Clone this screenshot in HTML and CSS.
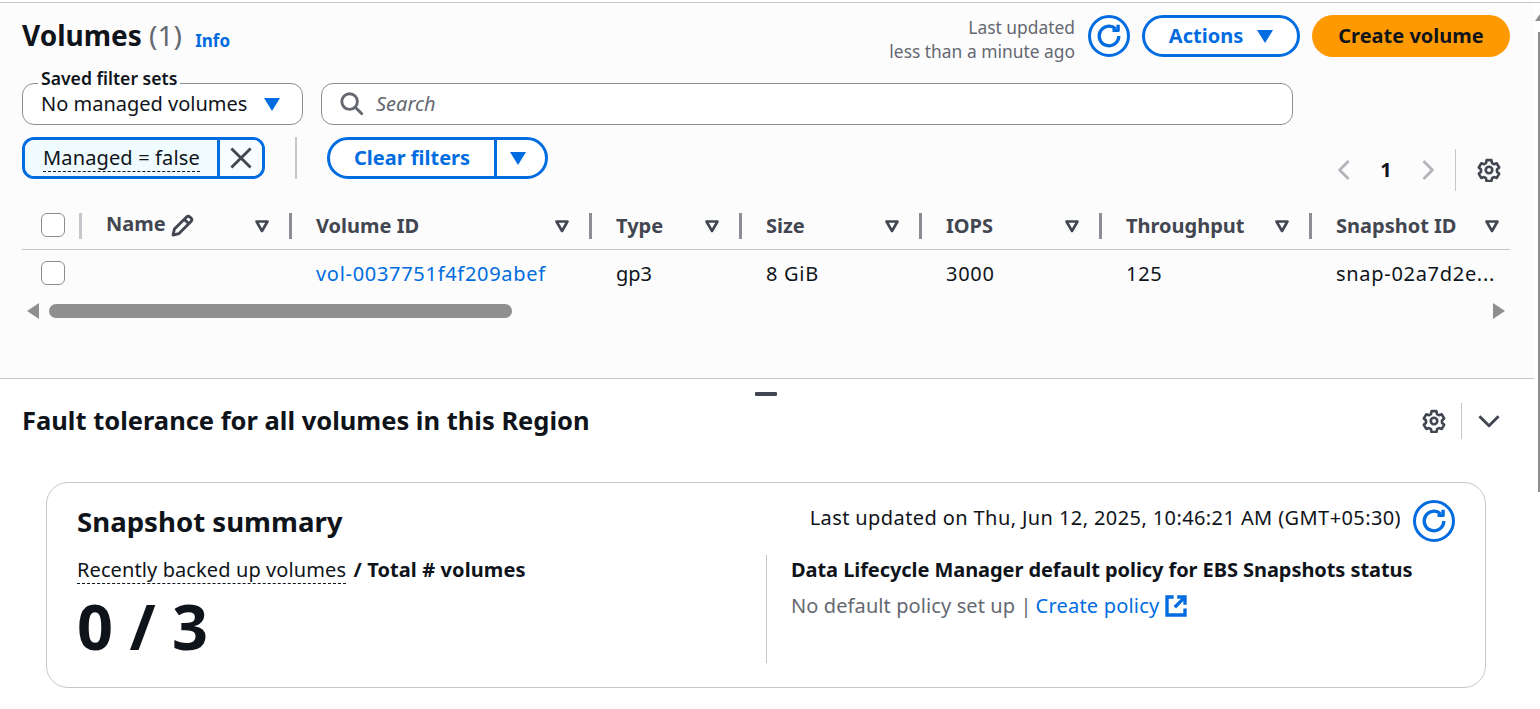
FILE: index.html
```html
<!DOCTYPE html>
<html lang="en">
<head>
  <meta charset="UTF-8" />
  <title>Volumes</title>
  <link rel="stylesheet" href="styles.css">
</head>
<body>
  <div class="top-rule"></div>
  <section class="top-panel">
    <div class="head-row">
      <h1 class="title">Volumes <span class="count">(1)</span> <a class="info">Info</a></h1>
      <div class="head-actions">
        <p class="updated">Last updated<br>less than a minute ago</p>
        <button class="icon-btn" aria-label="Refresh">
          <svg viewBox="0 0 20 20" width="28" height="28"><use href="#refresh-icon" /></svg>
        </button>
        <button class="btn btn-normal">Actions <span class="caret"></span></button>
        <button class="btn btn-primary">Create volume</button>
      </div>
    </div>

    <div class="filter-row">
      <div class="saved-filter">
        <span class="saved-label">Saved filter sets</span>
        <span>No managed volumes</span>
        <span class="caret"></span>
      </div>
      <div class="search">
        <svg viewBox="0 0 20 20" width="24" height="24"><circle cx="8" cy="8" r="6.500" /><path d="M12.800 12.800l6 6" /></svg>
        <span>Search</span>
      </div>
    </div>

    <div class="token-row">
      <div class="token-area">
        <div class="token">
          <span class="token-text"><span class="dotted">Managed = false</span></span>
          <button class="token-x" aria-label="Remove">
            <svg viewBox="0 0 20 20" width="24" height="24"><path d="M2 2l16 16M18 2L2 18" /></svg>
          </button>
        </div>
        <div class="token-sep"></div>
        <div class="split">
          <button class="split-main">Clear filters</button>
          <button class="split-arrow" aria-label="More"><span class="caret"></span></button>
        </div>
      </div>
      <div class="pager">
        <svg class="chev" viewBox="0 0 20 20" width="24" height="24"><path d="M13 2.500l-7.500 7.500 7.500 7.500" /></svg>
        <span class="page-num">1</span>
        <svg class="chev" viewBox="0 0 20 20" width="24" height="24"><path d="M7 2.500l7.500 7.500-7.500 7.500" /></svg>
        <span class="tool-sep"></span>
        <svg class="gear" viewBox="1 1 22 22" width="24" height="24"><use href="#gear-icon" /></svg>
      </div>
    </div>

    <div class="table">
      <div class="t-row t-head">
        <div class="cell cell-check"><span class="checkbox"></span></div>
        <div class="cell cell-name">
          <span class="name-head"><span class="name-text">Name</span>
            <svg viewBox="0 0 20 20" width="24" height="24"><path d="M2.500 17.500l1.200-5L13.800 2.500a2 2 0 0 1 2.800 0l.9.900a2 2 0 0 1 0 2.800L7.500 16.300z" /><path d="M12 4.500l3.500 3.500" /></svg>
          </span>
          <svg class="sort" viewBox="0 0 16 16" width="16" height="16"><use href="#sort-icon" /></svg>
        </div>
        <div class="cell">Volume ID<svg class="sort" viewBox="0 0 16 16" width="16" height="16"><use href="#sort-icon" /></svg></div>
        <div class="cell">Type<svg class="sort" viewBox="0 0 16 16" width="16" height="16"><use href="#sort-icon" /></svg></div>
        <div class="cell">Size<svg class="sort" viewBox="0 0 16 16" width="16" height="16"><use href="#sort-icon" /></svg></div>
        <div class="cell">IOPS<svg class="sort" viewBox="0 0 16 16" width="16" height="16"><use href="#sort-icon" /></svg></div>
        <div class="cell">Throughput<svg class="sort" viewBox="0 0 16 16" width="16" height="16"><use href="#sort-icon" /></svg></div>
        <div class="cell cell-last">Snapshot ID<svg class="sort" viewBox="0 0 16 16" width="16" height="16"><use href="#sort-icon" /></svg></div>
      </div>
      <div class="t-row t-body">
        <div class="cell cell-check"><span class="checkbox"></span></div>
        <div class="cell"></div>
        <div class="cell"><a class="link num">vol-0037751f4f209abef</a></div>
        <div class="cell">gp3</div>
        <div class="cell"><span class="num">8 GiB</span></div>
        <div class="cell"><span class="num">3000</span></div>
        <div class="cell"><span class="num">125</span></div>
        <div class="cell cell-last"><span class="num">snap-02a7d2e...</span></div>
      </div>
    </div>

    <div class="hscroll">
      <span class="arrow-left"></span>
      <div class="hscroll-track"><div class="hscroll-thumb"></div></div>
      <span class="arrow-right"></span>
    </div>
  </section>

  <section class="bottom-panel">
    <span class="drag-handle"></span>
    <div class="fault-head">
      <h2 class="fault-title">Fault tolerance for all volumes in this Region</h2>
      <div class="fault-tools">
        <svg class="gear" viewBox="1 1 22 22" width="24" height="24"><use href="#gear-icon" /></svg>
        <span class="tool-sep tool-sep-short"></span>
        <svg class="chev-down" viewBox="0 0 20 20" width="24" height="24"><path d="M2 6l8 8 8-8" /></svg>
      </div>
    </div>

    <div class="card">
      <div class="card-head">
        <h3 class="card-title">Snapshot summary</h3>
        <div class="card-updated">
          <span class="card-updated-text">Last updated on Thu, Jun 12, 2025, 10:46:21 AM (GMT+05:30)</span>
          <button class="icon-btn" aria-label="Refresh">
            <svg viewBox="0 0 20 20" width="28" height="28"><use href="#refresh-icon" /></svg>
          </button>
        </div>
      </div>
      <div class="card-cols">
        <div class="col-left">
          <p class="metric-label"><span class="dotted">Recently backed up volumes</span> <b class="metric-total">/ Total # volumes</b></p>
          <p class="metric">0 / 3</p>
        </div>
        <div class="col-right">
          <p class="policy-title">Data Lifecycle Manager default policy for EBS Snapshots status</p>
          <p class="policy-text"><span class="policy-note">No default policy set up |</span><a class="link policy-link">Create policy</a>
            <svg class="ext" viewBox="0 0 20 20" width="24" height="24"><path d="M8 2.500H2.500v15h15V12" /><path d="M11 2.500h6.500V9" /><path d="M17 3l-8 8" /></svg>
          </p>
        </div>
      </div>
    </div>
  </section>

  <svg class="defs" width="0" height="0">
    <defs>
      <g id="gear-icon">
        <path d="M9.800 3h4.400l.6 2.700 1.700 1 2.600-.8 2.200 3.800-2 1.900v2l2 1.900-2.200 3.800-2.600-.8-1.700 1-.6 2.700H9.800l-.6-2.700-1.700-1-2.600.8-2.200-3.800 2-1.900v-2l-2-1.900 2.200-3.800 2.600.8 1.700-1z" />
        <circle cx="12" cy="12" r="3" />
      </g>
      <g id="refresh-icon">
        <path d="M17 10a7 7 0 1 1-2.300-5.200" />
        <path d="M16.500 2v4h-4" />
      </g>
      <path id="sort-icon" d="M2.500 3.500h11L8 13z" />
    </defs>
  </svg>
  <div class="page-scroll"></div>
</body>
</html>
```

FILE: styles.css
```css
:root {
  --blue: #006ce0;
  --ink: #0f141a;
  --head-ink: #424650;
  --muted: #656871;
  --line: #c6c6cd;
  --border: #8c8c94;
}

* {
  box-sizing: border-box;
}

html, body {
  height: 100%;
}

body {
  margin: 0;
  padding-top: 2px;
  font-family: "Noto Sans", "Open Sans", sans-serif;
  font-size: 20px;
  line-height: 28px;
  color: var(--ink);
  background: #fff;
  overflow: hidden;
}

svg {
  fill: none;
  stroke: currentColor;
  stroke-width: 2.4;
  stroke-linejoin: round;
  flex: none;
}

button {
  font: inherit;
  background: none;
  border: none;
  padding: 0;
}

p, h1, h2, h3 {
  margin: 0;
}

.defs {
  position: absolute;
}

/* browser scrollbar sliver on the right edge */
.page-scroll {
  position: absolute;
  right: 0;
  top: 32px;
  width: 2px;
  height: 460px;
  background: #8f8f8f;
}

.page-scroll::before {
  content: "";
  position: absolute;
  top: -18px;
  right: 0;
  border-left: 5px solid transparent;
  border-bottom: 7px solid #8f8f8f;
}

.top-rule {
  height: 1px;
  background: var(--line);
}

/* top split panel */
.top-panel {
  height: 376px;
  margin-right: 6px;
  padding: 12px 24px 0 22px;
  background: #fcfcfc;
  border-bottom: 1px solid var(--line);
}

.head-row {
  display: flex;
  justify-content: space-between;
  height: 43px;
}

.title {
  font-size: 28px;
  line-height: 40px;
  font-weight: 700;
}

.count {
  font-weight: 400;
  color: var(--muted);
}

.info {
  font-size: 17px;
  font-weight: 700;
  color: var(--blue);
  margin-left: 6px;
  vertical-align: -1px;
}

.head-actions {
  display: flex;
  align-items: flex-start;
  gap: 12px;
}

.updated {
  font-size: 17.400px;
  line-height: 24px;
  text-align: right;
  color: var(--muted);
  margin-right: 1px;
}

.icon-btn {
  width: 42px;
  height: 42px;
  border: 3px solid var(--blue);
  border-radius: 50%;
  color: var(--blue);
  display: flex;
  align-items: center;
  justify-content: center;
  background: #fff;
}

.btn {
  height: 42px;
  border-radius: 21px;
  font-weight: 700;
  display: flex;
  align-items: center;
  justify-content: center;
}

.btn-normal {
  width: 158px;
  gap: 14px;
  color: var(--blue);
  background: #fff;
  border: 3px solid var(--blue);
}

.btn-primary {
  width: 198px;
  background: #ff9900;
  color: var(--ink);
}

.caret {
  display: inline-block;
  width: 0;
  height: 0;
  border-left: 8px solid transparent;
  border-right: 8px solid transparent;
  border-top: 13px solid var(--blue);
}

/* filter row */
.filter-row {
  display: flex;
  gap: 18px;
  margin-top: 25px;
}

.saved-filter {
  position: relative;
  width: 281px;
  height: 42px;
  border: 1px solid var(--border);
  border-radius: 12px;
  background: #fff;
  padding: 0 22px 0 18px;
  display: flex;
  align-items: center;
  justify-content: space-between;
}

.saved-label {
  position: absolute;
  top: -17px;
  left: 15px;
  padding: 0 3px;
  font-size: 17.600px;
  line-height: 22px;
  font-weight: 600;
  background: linear-gradient(#fcfcfc 72%, #fff 72%);
}

.search {
  width: 972px;
  height: 42px;
  border: 1px solid var(--border);
  border-radius: 12px;
  background: #fff;
  padding-left: 18px;
  display: flex;
  align-items: center;
  gap: 12px;
  font-style: italic;
  color: var(--muted);
}

.token-row {
  display: flex;
  justify-content: space-between;
  margin-top: 12px;
}

.token-area {
  display: flex;
  align-items: center;
  height: 42px;
}

.token {
  display: flex;
  width: 243px;
  height: 42px;
  border: 3px solid var(--blue);
  border-radius: 12px;
  overflow: hidden;
}

.token-text {
  flex: 1;
  background: #f0fbff;
  padding-left: 18px;
  line-height: 36px;
  letter-spacing: .14px;
}

.dotted {
  border-bottom: 1px dashed var(--ink);
}

.token-x {
  width: 45px;
  border-left: 3px solid var(--blue);
  color: var(--head-ink);
  display: flex;
  align-items: center;
  justify-content: center;
  background: #f6fcff;
}

.token-sep {
  width: 2px;
  height: 42px;
  background: var(--line);
  margin: 0 30px;
}

.split {
  display: flex;
  width: 221px;
  height: 42px;
  border: 3px solid var(--blue);
  border-radius: 21px;
  background: #fff;
  color: var(--blue);
  font-weight: 700;
}

.split-main {
  width: 167px;
  color: inherit;
  font-weight: 700;
  border-right: 3px solid var(--blue);
}

.split-arrow {
  flex: 1;
  display: flex;
  align-items: center;
  justify-content: center;
  padding-right: 6px;
}

.pager {
  display: flex;
  align-items: center;
  height: 42px;
  margin: 12px 9px 0 0;
}

.chev {
  color: #b4b4bb;
}

.page-num {
  font-weight: 700;
  width: 58px;
  text-align: center;
}

.tool-sep {
  width: 1px;
  height: 42px;
  background: var(--line);
  margin: 0 21px 0 16px;
}

.tool-sep-short {
  height: 36px;
  margin: 0 15px;
}

.gear {
  color: var(--head-ink);
}

/* table */
.table {
  margin-top: 10px;
  width: 1488px;
}

.t-row {
  display: grid;
  grid-template-columns: 58px 210px 300px 150px 180px 180px 210px 200px;
}

.t-head {
  height: 49px;
  border-bottom: 1px solid var(--line);
  font-weight: 700;
  color: var(--head-ink);
}

.t-body {
  height: 49px;
  padding-bottom: 2px;
}

.cell {
  padding: 0 20px 0 26px;
  display: flex;
  align-items: center;
  justify-content: space-between;
  white-space: nowrap;
}

.t-head .cell {
  position: relative;
  padding-top: 2px;
}

.t-head .cell::before {
  content: "";
  position: absolute;
  left: -1px;
  top: 12px;
  height: 26px;
  width: 3px;
  background: var(--border);
}

.t-head .cell-check::before {
  display: none;
}

.t-head .cell-name::before {
  background: var(--line);
}

.cell-check,
.t-head .cell-check {
  padding: 0 0 0 19px;
}

.cell-last {
  padding-right: 10px;
}

.checkbox {
  width: 24px;
  height: 24px;
  border: 1px solid var(--border);
  border-radius: 6px;
  background: #fff;
}

.t-body .checkbox {
  margin-bottom: 2px;
}

.name-head {
  display: flex;
  align-items: center;
  gap: 4px;
}

.name-text {
  margin-bottom: 4px;
}

.sort {
  color: var(--head-ink);
  stroke-width: 2.600;
}

.link {
  color: var(--blue);
}

/* digits run wider in the original font */
.num {
  letter-spacing: .7px;
}

/* horizontal scrollbar */
.hscroll {
  display: flex;
  align-items: center;
  gap: 10px;
  width: 1488px;
  padding-left: 5px;
  height: 24px;
}

.hscroll-track {
  flex: 1;
}

.hscroll-thumb {
  width: 463px;
  height: 14px;
  border-radius: 7px;
  background: #8f8f8f;
}

.arrow-left {
  border-top: 8px solid transparent;
  border-bottom: 8px solid transparent;
  border-right: 12px solid #8f8f8f;
}

.arrow-right {
  border-top: 8px solid transparent;
  border-bottom: 8px solid transparent;
  border-left: 12px solid #8f8f8f;
  margin-right: 5px;
}

/* bottom panel */
.bottom-panel {
  position: relative;
  padding: 21px 39px 0 22px;
}

.drag-handle {
  position: absolute;
  top: 13px;
  left: 755px;
  width: 22px;
  height: 4px;
  border-radius: 1px;
  background: var(--head-ink);
}

.fault-head {
  display: flex;
  justify-content: space-between;
  align-items: center;
  height: 42px;
}

.fault-title {
  font-size: 25.500px;
  line-height: 40px;
  font-weight: 700;
  margin-bottom: 2px;
}

.fault-tools {
  display: flex;
  align-items: center;
}

.chev-down {
  color: var(--head-ink);
}

.card {
  margin: 40px 0 0 24px;
  width: 1440px;
  height: 206px;
  border: 1px solid var(--line);
  border-radius: 22px;
  padding: 14px 30px 0;
}

.card-head {
  display: flex;
  justify-content: space-between;
  align-items: center;
  height: 48px;
}

.card-title {
  font-size: 27.600px;
  line-height: 40px;
  font-weight: 700;
}

.card-updated {
  display: flex;
  align-items: center;
  gap: 12px;
}

.card-updated-text {
  letter-spacing: .4px;
  margin-bottom: 6px;
}

.card-cols {
  display: grid;
  grid-template-columns: 689px 1fr;
  margin-top: 10px;
}

.metric-label {
  line-height: 30px;
  letter-spacing: .1px;
}

.metric-total {
  margin-left: 2px;
}

.metric {
  font-size: 63px;
  line-height: 78px;
  font-weight: 700;
  margin-top: 2px;
}

.col-right {
  border-left: 1px solid var(--line);
  padding-left: 24px;
  height: 108px;
}

.policy-title {
  font-weight: 700;
  line-height: 30px;
  letter-spacing: -.07px;
}

.policy-text {
  margin-top: 7px;
  color: var(--muted);
  display: flex;
  align-items: center;
}

.policy-note {
  letter-spacing: .1px;
}

.policy-link {
  margin-left: 4px;
  letter-spacing: .2px;
}

.ext {
  color: var(--blue);
  margin-left: 5px;
  stroke-width: 2.800;
  stroke-linejoin: miter;
}
```
